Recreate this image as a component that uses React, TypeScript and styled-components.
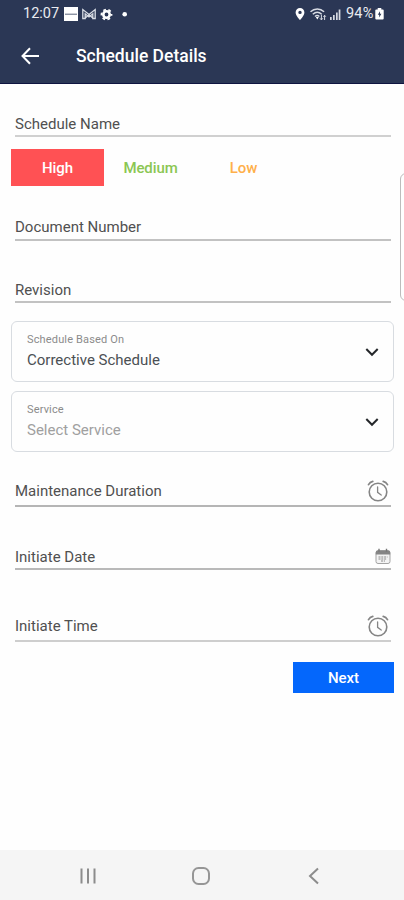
import React from "react";
import styled, { createGlobalStyle } from "styled-components";

const GlobalStyle = createGlobalStyle`
  * { box-sizing: border-box; }
  body { margin: 0; background: #fefefe; font-family: Roboto, "Liberation Sans", sans-serif; }
`;

const Screen = styled.div`
  position: relative;
  display: flex;
  flex-direction: column;
  width: 404px;
  height: 900px;
  overflow: hidden;
  background: #fefefe;
`;

const Header = styled.header`
  height: 84px;
  background: #2b3755;
  border-bottom: 1px solid #0f1440;
  color: #fff;
`;

const StatusBar = styled.div`
  display: flex;
  justify-content: space-between;
  height: 27px;
  padding: 0 20px 0 23px;
  color: #e9ebf0;
  font-size: 14.5px;
  line-height: 27px;
`;

const StatusGroup = styled.div`
  display: flex;
  align-items: center;
  svg { display: block; flex: none; }
`;

const Clock = styled.span`
  width: 41px;
  letter-spacing: 0;
  white-space: nowrap;
`;

const Percent = styled.span`
  width: 29px;
  margin-left: 3px;
  letter-spacing: 0.2px;
  white-space: nowrap;
`;

const AppBar = styled.div`
  display: flex;
  align-items: center;
  height: 57px;
  padding-left: 20px;
`;

const Title = styled.h1`
  margin: 0 0 0 35px;
  font-size: 17.5px;
  font-weight: 500;
  line-height: 24px;
  white-space: nowrap;
`;

const Form = styled.main`
  display: flex;
  flex-direction: column;
  flex: 1;
  padding: 0 10px 0 11px;
`;

const Field = styled.div<{ $height: number; $tone?: string; $gap: number }>`
  display: flex;
  flex: none;
  align-items: flex-end;
  justify-content: space-between;
  height: ${(p) => p.$height}px;
  margin: 0 3px 0 4px;
  padding-bottom: ${(p) => p.$gap}px;
  border-bottom: 2px solid ${(p) => p.$tone ?? "#c2c2c2"};
  svg { display: block; }
`;

const FieldLabel = styled.span`
  color: #505050;
  font-size: 15px;
  line-height: 18px;
  letter-spacing: 0;
  white-space: nowrap;
`;

const IconSlot = styled.span<{ $drop: number; $right: number }>`
  margin: 0 ${(p) => p.$right}px ${(p) => p.$drop}px 0;
`;

const PriorityRow = styled.div`
  display: flex;
  flex: none;
  height: 37px;
  margin-top: 12px;
`;

const Priority = styled.button<{ $color: string; $active?: boolean }>`
  width: 93px;
  padding: 0;
  border: 0;
  background: ${(p) => (p.$active ? "#ff5154" : "transparent")};
  color: ${(p) => p.$color};
  font: 500 15px/39px Roboto, sans-serif;
  letter-spacing: -0.1px;
`;

const Select = styled.div<{ $top: number }>`
  display: flex;
  flex: none;
  align-items: center;
  justify-content: space-between;
  height: 61px;
  margin-top: ${(p) => p.$top}px;
  padding: 0 14px 0 15px;
  border: 1.5px solid #d8dce1;
  border-radius: 6px;
`;

const SelectText = styled.div`
  display: flex;
  flex-direction: column;
`;

const Caption = styled.span`
  color: #8b8b8b;
  font-size: 11px;
  line-height: 16px;
  letter-spacing: 0.15px;
`;

const Value = styled.span<{ $muted?: boolean }>`
  margin: 2px 0 1px;
  color: ${(p) => (p.$muted ? "#a0a0a0" : "#4b5054")};
  font-size: 15px;
  line-height: 20px;
  letter-spacing: 0;
`;

const NextButton = styled.button`
  align-self: flex-end;
  width: 101px;
  height: 31px;
  margin-top: 20px;
  padding: 0;
  border: 0;
  background: #0467fc;
  color: #fff;
  font: 500 15px/33px Roboto, sans-serif;
`;

const Drawer = styled.aside`
  position: absolute;
  top: 173px;
  left: 400px;
  width: 20px;
  height: 128px;
  border: 1px solid #bcbcbc;
  border-radius: 6px;
`;

const NavBar = styled.nav`
  display: flex;
  flex: none;
  align-items: center;
  height: 50px;
  padding: 2px 0 0 78px;
  background: #f5f5f5;
  svg { display: block; margin-right: 93px; flex: none; }
`;

const BackArrow = () => (
  <svg width="21" height="20" viewBox="0 0 21 20" fill="none" stroke="#fff" strokeWidth="2">
    <path d="M19 10H3M10 2.2L2.5 10l7.5 7.8" />
  </svg>
);

const LeftStatusIcons = () => (
  <svg width="66" height="20" viewBox="0 0 66 20">
    <path fill="#fff" d="M0 3h14v14H0z" />
    <path stroke="#5a647b" d="M1 10.2h12" />
    <g fill="none" stroke="#d9dde5" strokeWidth="1.3">
      <path d="M18.8 14.5v-9l6.2 5 6.2-5v9h-2.4V9.8L25 13l-3.8-3.2v4.7zM21.5 13.8l3.5-3 3.5 3" />
    </g>
    <circle cx="42.5" cy="10.5" r="3.2" fill="none" stroke="#fff" strokeWidth="2.6" />
    <circle cx="42.5" cy="10.5" r="5" fill="none" stroke="#fff" strokeWidth="1.8" strokeDasharray="2.7 2.536" strokeDashoffset="1.3" />
    <circle cx="60.7" cy="10.3" r="2.3" fill="#fff" />
  </svg>
);

const RightStatusIcons = () => (
  <svg width="48" height="20" viewBox="0 0 48 20">
    <path fill="#fff" fillRule="evenodd" d="M5 4a4.4 4.4 0 0 1 4.4 4.4C9.4 11.5 5 16 5 16S.6 11.5.6 8.4A4.4 4.4 0 0 1 5 4zm0 2.7a1.7 1.7 0 1 0 0 3.4 1.7 1.7 0 0 0 0-3.4z" />
    <g fill="none" stroke="#d8dce4" strokeWidth="1.5">
      <path d="M15.5 7.7c4-3.7 9.6-3.7 13.6 0M17.8 10.2c2.7-2.4 6.2-2.4 8.9 0M20 12.5c1.4-1.2 3-1.2 4.4 0" />
      <path d="M26.4 10.8v5M25 14.3l1.4 1.6 1.4-1.6M29.6 16v-4.6M28.4 12.7l1.2-1.4 1.2 1.4" strokeWidth="1" />
    </g>
    <path fill="#fff" d="M20.8 13h3l-1.5 2.6z" />
    <path fill="#d6dae2" d="M35 13h1.7v3H35zM38 11h1.7v5H38zM41 8.5h1.7V16H41zM43.7 5.5h1.7V16h-1.7z" />
  </svg>
);

const Battery = () => (
  <svg width="9" height="13" viewBox="0 0 9 13">
    <path fill="#fff" d="M2.7 1h3.6v1.4h1.5q.9 0 .9.9v8.1q0 1-1 1H1.3q-1 0-1-1V3.3q0-.9.9-.9h1.5z" />
    <path fill="#2b3755" d="M5 4.2L2.8 7.8h1.4v2.7l2.2-3.7H5z" />
  </svg>
);

const AlarmIcon = () => (
  <svg width="22" height="22" viewBox="0 0 22 22" fill="none" stroke="#858585" strokeLinecap="round">
    <circle cx="11" cy="12" r="8.8" strokeWidth="1.6" />
    <path d="M10.6 7v5.3l3.6 2.7" strokeWidth="1.3" />
    <path d="M1.5 4.7C2.4 3 3.8 1.8 5.8 1.4M20.5 4.7C19.6 3 18.2 1.8 16.2 1.4" strokeWidth="1.7" />
  </svg>
);

const CalendarIcon = () => (
  <svg width="16" height="17" viewBox="0 0 16 17">
    <rect x="1" y="3" width="14" height="12.5" rx="2" fill="#f3f3f3" stroke="#a3a3a3" />
    <path fill="#858585" d="M.8 6.5V4Q.8 2.2 3 2.2h10q2.2 0 2.2 1.8v2.5z" />
    <path stroke="#777" strokeWidth="1.4" d="M4 .8v3M11.5.8v3" />
    <path stroke="#adadad" strokeWidth="1.3" strokeDasharray="2 .8" d="M3.5 9h9M3.5 11h8M6 13h4" />
  </svg>
);

const Chevron = () => (
  <svg width="14" height="10" viewBox="0 0 14 10" fill="none" stroke="#24272a" strokeWidth="2">
    <path d="M1.3 2L7 7.8 12.7 2" />
  </svg>
);

const Dropdown = ({ top, caption, value, muted }: { top: number; caption: string; value: string; muted?: boolean }) => (
  <Select $top={top}>
    <SelectText>
      <Caption>{caption}</Caption>
      <Value $muted={muted}>{value}</Value>
    </SelectText>
    <Chevron />
  </Select>
);

export default function App() {
  return (
    <Screen>
      <GlobalStyle />
      <Header>
        <StatusBar>
          <StatusGroup>
            <Clock>12:07</Clock>
            <LeftStatusIcons />
          </StatusGroup>
          <StatusGroup>
            <RightStatusIcons />
            <Percent>94%</Percent>
            <Battery />
          </StatusGroup>
        </StatusBar>
        <AppBar>
          <BackArrow />
          <Title>Schedule Details</Title>
        </AppBar>
      </Header>
      <Form>
        <Field $height={53} $gap={2} $tone="#d0d0d0">
          <FieldLabel>Schedule Name</FieldLabel>
        </Field>
        <PriorityRow>
          <Priority $color="#fff" $active>High</Priority>
          <Priority $color="#8bc653">Medium</Priority>
          <Priority $color="#ffb04a">Low</Priority>
        </PriorityRow>
        <Field $height={55} $gap={3}>
          <FieldLabel>Document Number</FieldLabel>
        </Field>
        <Field $height={62} $gap={2}>
          <FieldLabel>Revision</FieldLabel>
        </Field>
        <Dropdown top={18} caption="Schedule Based On" value="Corrective Schedule" />
        <Dropdown top={9} caption="Service" value="Select Service" muted />
        <Field $height={55} $gap={5} $tone="#b5b5b5">
          <FieldLabel>Maintenance Duration</FieldLabel>
          <IconSlot $drop={-2} $right={2}><AlarmIcon /></IconSlot>
        </Field>
        <Field $height={63} $gap={2} $tone="#b9b9b9">
          <FieldLabel>Initiate Date</FieldLabel>
          <IconSlot $drop={1} $right={0}><CalendarIcon /></IconSlot>
        </Field>
        <Field $height={72} $gap={5} $tone="#cecece">
          <FieldLabel>Initiate Time</FieldLabel>
          <IconSlot $drop={-2} $right={2}><AlarmIcon /></IconSlot>
        </Field>
        <NextButton>Next</NextButton>
      </Form>
      <Drawer />
      <NavBar>
        <svg width="20" height="18" viewBox="0 0 20 18" stroke="#8c8c8c" strokeWidth="2">
          <path d="M3.5 1.5v15M10 1.5v15M16.5 1.5v15" />
        </svg>
        <svg width="20" height="20" viewBox="0 0 20 20" fill="none" stroke="#969696" strokeWidth="2">
          <rect x="2" y="2" width="16" height="16" rx="5.5" />
        </svg>
        <svg width="20" height="20" viewBox="0 0 20 20" fill="none" stroke="#8c8c8c" strokeWidth="2">
          <path d="M14 2.5L6 10l8 7.5" />
        </svg>
      </NavBar>
    </Screen>
  );
}
